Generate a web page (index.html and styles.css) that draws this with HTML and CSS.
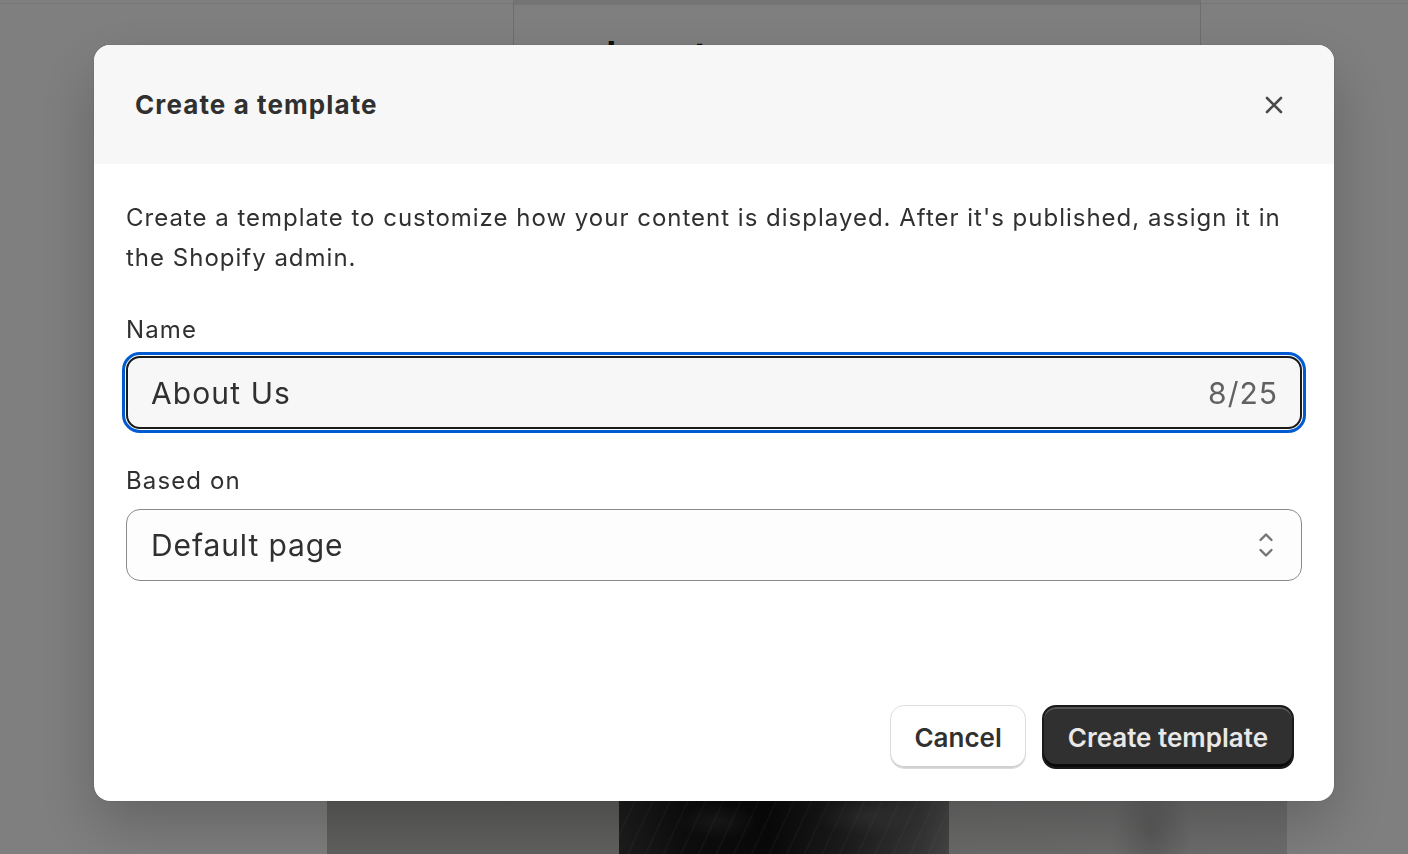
FILE: index.html
```html
<!DOCTYPE html>
<html lang="en">
<head>
    <meta charset="UTF-8">
    <meta name="viewport" content="width=device-width, initial-scale=1.0">
    <title>Create a template</title>
    <link rel="stylesheet" href="styles.css">
</head>
<body>
    <!-- Editor page behind the dialog -->
    <div class="page">
        <div class="page-rule"></div>
        <div class="preview">
            <h2 class="preview-title">about us</h2>
        </div>
        <div class="hero">
            <div class="hero-left"></div>
            <div class="hero-vase"></div>
            <div class="hero-right"></div>
        </div>
    </div>

    <div class="overlay">
        <div class="modal" role="dialog" aria-labelledby="modalTitle">
            <div class="modal-header">
                <h1 class="modal-title" id="modalTitle">Create a template</h1>
                <button class="close-btn" aria-label="Close">
                    <svg width="24" height="24" viewBox="0 0 24 24">
                        <path d="M5 5L19 19M19 5L5 19" stroke="#4a4a4a" stroke-width="2.6" stroke-linecap="round" fill="none"/>
                    </svg>
                </button>
            </div>

            <div class="modal-body">
                <p class="intro">Create a template to customize how your content is displayed. After it's published, assign it in the Shopify admin.</p>

                <label class="field-label" for="templateName">Name</label>
                <div class="text-field">
                    <span class="text-value" id="templateName">About Us</span>
                    <span class="char-count">8/25</span>
                </div>

                <label class="field-label">Based on</label>
                <div class="select">
                    <span class="select-value">Default page</span>
                    <svg class="select-icon" width="16" height="26" viewBox="0 0 16 26">
                        <path d="M2.5 8L8 2.5L13.5 8M2.5 18L8 23.5L13.5 18" stroke="#747474" stroke-width="2.4" stroke-linecap="round" stroke-linejoin="round" fill="none"/>
                    </svg>
                </div>
            </div>

            <div class="modal-footer">
                <button class="btn btn-secondary">Cancel</button>
                <button class="btn btn-primary">Create template</button>
            </div>
        </div>
    </div>
</body>
</html>
```

FILE: styles.css
```css
:root {
    --text: #303030;
    --text-muted: #616161;
    --surface: #f7f7f7;
    --focus: #005bd3;
    --border: #8a8a8a;
}

* {
    margin: 0;
    padding: 0;
    box-sizing: border-box;
}

body {
    font-family: Inter, 'Noto Sans', sans-serif;
    background: #fff;
    color: var(--text);
    height: 100vh;
    overflow: hidden;
}

/* Page behind the overlay */
.page {
    height: 100vh;
    display: flex;
    flex-direction: column;
}

.page-rule {
    height: 4px;
    border-bottom: 1px solid #ececec;
    flex-shrink: 0;
}

.preview {
    margin: -5px 0 0 513px;
    width: 688px;
    height: 801px;
    flex-shrink: 0;
    background: #fff;
    border-left: 1px solid #dadada;
    border-right: 1px solid #dadada;
    border-top: 6px solid #e8e8e8;
}

.preview-title {
    font-size: 48px;
    font-weight: 500;
    color: #1a1a1a;
    padding: 24px 0 0 64px;
}

.hero {
    margin-left: 327px;
    width: 960px;
    flex: 1;
    display: flex;
}

.hero-left {
    width: 292px;
    background: linear-gradient(180deg, #bdbdb9, #c4c4c0);
}

.hero-vase {
    width: 330px;
    background:
        radial-gradient(ellipse 40px 18px at 30% 40%, rgba(255, 255, 255, 0.12), transparent),
        radial-gradient(ellipse 50px 20px at 75% 30%, rgba(255, 255, 255, 0.15), transparent),
        repeating-linear-gradient(115deg, transparent 0 14px, rgba(255, 255, 255, 0.06) 14px 16px),
        linear-gradient(90deg, #3a3a3a 0%, #1c1c1c 20%, #121212 45%, #3c3c3c 70%, #6e6e6e 92%, #8a8a8a 100%);
}

.hero-right {
    flex: 1;
    background:
        radial-gradient(ellipse 40px 60px at 60% 60%, rgba(0, 0, 0, 0.16), transparent),
        linear-gradient(90deg, #d6d6d4, #dcdcdc);
}

/* Dialog */
.overlay {
    position: fixed;
    inset: 0;
    background: rgba(0, 0, 0, 0.5);
    padding: 45px 0 0 94px;
}

.modal {
    width: 1240px;
    height: 756px;
    background: #fff;
    border-radius: 16px;
    overflow: hidden;
    display: flex;
    flex-direction: column;
    box-shadow: 0 26px 60px rgba(0, 0, 0, 0.22), 0 0 2px rgba(0, 0, 0, 0.2);
}

.modal-header {
    height: 119px;
    flex-shrink: 0;
    background: var(--surface);
    display: flex;
    align-items: center;
    justify-content: space-between;
    padding: 0 42px 0 41px;
}

.modal-title {
    font-size: 26px;
    font-weight: 700;
    letter-spacing: 1.1px;
}

.close-btn {
    width: 36px;
    height: 36px;
    border: none;
    background: none;
    display: flex;
    align-items: center;
    justify-content: center;
    cursor: pointer;
}

.modal-body {
    flex: 1;
    padding: 34px 32px 0;
    letter-spacing: 1.1px;
}

.intro {
    font-size: 24px;
    line-height: 40px;
    letter-spacing: 1px;
}

.field-label {
    display: block;
    font-size: 24px;
    line-height: 40px;
    margin: 32px 0 8px;
}

.intro + .field-label {
    margin: 32px 0 6px;
}

.text-field {
    height: 73px;
    border: 2px solid #1a1a1a;
    border-radius: 14px;
    background: var(--surface);
    outline: 3px solid var(--focus);
    outline-offset: 1px;
    display: flex;
    align-items: center;
    justify-content: space-between;
    padding: 0 22px 0 23px;
    font-size: 30px;
}

.char-count {
    color: var(--text-muted);
    letter-spacing: 1px;
}

.select {
    height: 72px;
    border: 1px solid var(--border);
    border-radius: 14px;
    background: #fdfdfd;
    display: flex;
    align-items: center;
    justify-content: space-between;
    padding: 0 27px 0 24px;
    font-size: 30px;
    letter-spacing: 0.9px;
}

.modal-footer {
    display: flex;
    justify-content: flex-end;
    gap: 16px;
    padding: 0 40px 32px;
}

.btn {
    height: 64px;
    padding: 0 24px;
    border-radius: 14px;
    font-family: inherit;
    font-size: 26px;
    font-weight: 600;
    cursor: pointer;
}

.btn-secondary {
    padding: 0 23px;
    background: #fff;
    color: var(--text);
    border: 1px solid #dcdcdc;
    box-shadow: inset 0 -2px 0 #d0d0d0;
}

.btn-primary {
    background: #303030;
    color: #e8e8e8;
    border: 2px solid #1a1a1a;
    box-shadow: inset 0 -3px 0 #0a0a0a, inset 0 2px 0 rgba(255, 255, 255, 0.18);
}
```
